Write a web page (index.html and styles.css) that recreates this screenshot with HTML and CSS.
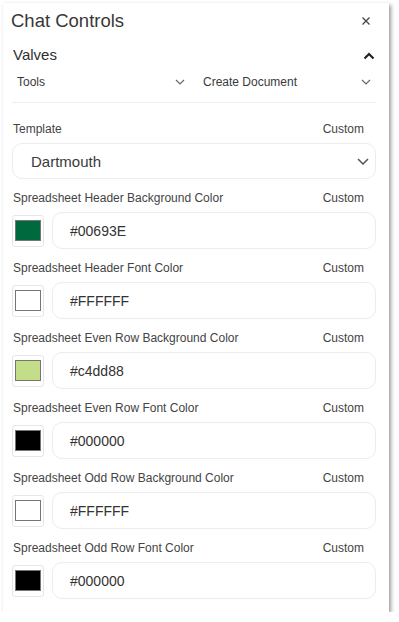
FILE: index.html
```html
<!DOCTYPE html>
<html lang="en">

<head>
    <meta charset="UTF-8">
    <meta name="viewport" content="width=device-width, initial-scale=1.0">
    <title>Chat Controls</title>
    <link rel="stylesheet" href="styles.css">
</head>

<body>
    <div class="panel">
        <div class="header">
            <h1>Chat Controls</h1>
            <svg class="close" width="10" height="10" viewBox="0 0 10 10">
                <path d="M1.5 1.5 L8.5 8.5 M8.5 1.5 L1.5 8.5" stroke="#444" stroke-width="1.3" fill="none" />
            </svg>
        </div>

        <div class="valves">
            <span>Valves</span>
            <svg width="12" height="8" viewBox="0 0 12 8">
                <path d="M1.5 6.5 L6 2 L10.5 6.5" stroke="#222" stroke-width="2.2" fill="none" />
            </svg>
        </div>

        <div class="pickers">
            <div class="picker">
                <span>Tools</span>
                <svg width="10" height="6" viewBox="0 0 10 6">
                    <path d="M1 1 L5 5 L9 1" stroke="#666" stroke-width="1.2" fill="none" />
                </svg>
            </div>
            <div class="picker">
                <span>Create Document</span>
                <svg width="10" height="6" viewBox="0 0 10 6">
                    <path d="M1 1 L5 5 L9 1" stroke="#666" stroke-width="1.2" fill="none" />
                </svg>
            </div>
        </div>

        <hr class="divider">

        <div class="field">
            <div class="label-row">
                <span>Template</span>
                <span>Custom</span>
            </div>
            <div class="select">
                <span>Dartmouth</span>
                <svg width="12" height="7" viewBox="0 0 12 7">
                    <path d="M1 1 L6 6 L11 1" stroke="#555" stroke-width="1.5" fill="none" />
                </svg>
            </div>
        </div>

        <div class="field">
            <div class="label-row">
                <span>Spreadsheet Header Background Color</span>
                <span>Custom</span>
            </div>
            <div class="color-row">
                <div class="swatch"><div class="chip" style="background:#00693E"></div></div>
                <div class="text-input">#00693E</div>
            </div>
        </div>

        <div class="field">
            <div class="label-row">
                <span>Spreadsheet Header Font Color</span>
                <span>Custom</span>
            </div>
            <div class="color-row">
                <div class="swatch"><div class="chip" style="background:#FFFFFF"></div></div>
                <div class="text-input">#FFFFFF</div>
            </div>
        </div>

        <div class="field">
            <div class="label-row">
                <span>Spreadsheet Even Row Background Color</span>
                <span>Custom</span>
            </div>
            <div class="color-row">
                <div class="swatch"><div class="chip" style="background:#c4dd88"></div></div>
                <div class="text-input">#c4dd88</div>
            </div>
        </div>

        <div class="field">
            <div class="label-row">
                <span>Spreadsheet Even Row Font Color</span>
                <span>Custom</span>
            </div>
            <div class="color-row">
                <div class="swatch"><div class="chip" style="background:#000000"></div></div>
                <div class="text-input">#000000</div>
            </div>
        </div>

        <div class="field">
            <div class="label-row">
                <span>Spreadsheet Odd Row Background Color</span>
                <span>Custom</span>
            </div>
            <div class="color-row">
                <div class="swatch"><div class="chip" style="background:#FFFFFF"></div></div>
                <div class="text-input">#FFFFFF</div>
            </div>
        </div>

        <div class="field">
            <div class="label-row">
                <span>Spreadsheet Odd Row Font Color</span>
                <span>Custom</span>
            </div>
            <div class="color-row">
                <div class="swatch"><div class="chip" style="background:#000000"></div></div>
                <div class="text-input">#000000</div>
            </div>
        </div>
    </div>
</body>

</html>
```

FILE: styles.css
```css
* {
    margin: 0;
    padding: 0;
    box-sizing: border-box;
}

body {
    background-color: #ffffff;
    font-family: "Liberation Sans", Arial, sans-serif;
    color: #333;
}

.panel {
    margin: 3px 0 0 3px;
    width: 386px;
    height: 609px;
    padding: 6px 13px 0 9px;
    background-color: #ffffff;
    box-shadow: 2px 2px 4px rgba(0, 0, 0, 0.4);
}

.header {
    display: flex;
    justify-content: space-between;
    align-items: center;
    height: 24px;
}

.header h1 {
    font-size: 18.5px;
    font-weight: 400;
    color: #383838;
    margin-left: -1px;
}

.close {
    margin-right: 5px;
}

.valves {
    display: flex;
    justify-content: space-between;
    align-items: center;
    margin-top: 9px;
    height: 24px;
    padding-left: 1px;
    font-size: 15px;
    color: #2f2f2f;
}

.valves svg {
    margin-right: 1px;
    margin-top: 3px;
}

.pickers {
    display: grid;
    grid-template-columns: 1fr 1fr;
    gap: 8px;
    margin-top: 6px;
}

.picker {
    display: flex;
    justify-content: space-between;
    align-items: center;
    height: 20px;
    padding: 0 5px;
    font-size: 12px;
    color: #3a3a3a;
}

.divider {
    border: none;
    border-top: 1px solid #eeeeee;
    margin: 10px 0 18px;
}

.field {
    margin-top: 11px;
}

.label-row {
    display: flex;
    justify-content: space-between;
    height: 16px;
    align-items: center;
    padding: 0 12px 0 1px;
    font-size: 12px;
    color: #444;
}

.select {
    display: flex;
    justify-content: space-between;
    align-items: center;
    height: 36px;
    margin-top: 6px;
    padding: 0 6px 0 18px;
    border: 1px solid #ececec;
    border-radius: 10px;
    font-size: 15px;
    color: #3a3a3a;
}

.color-row {
    display: flex;
    align-items: center;
    gap: 8px;
    margin-top: 6px;
}

.swatch {
    width: 32px;
    height: 32px;
    border: 1px solid #e6e6e6;
    border-radius: 3px;
    display: flex;
    justify-content: center;
    align-items: center;
}

.chip {
    width: 26px;
    height: 21px;
    border: 1px solid #767676;
}

.text-input {
    flex: 1;
    height: 37px;
    display: flex;
    align-items: center;
    padding-left: 17px;
    border: 1px solid #ececec;
    border-radius: 10px;
    font-size: 14px;
    color: #333;
}
```
